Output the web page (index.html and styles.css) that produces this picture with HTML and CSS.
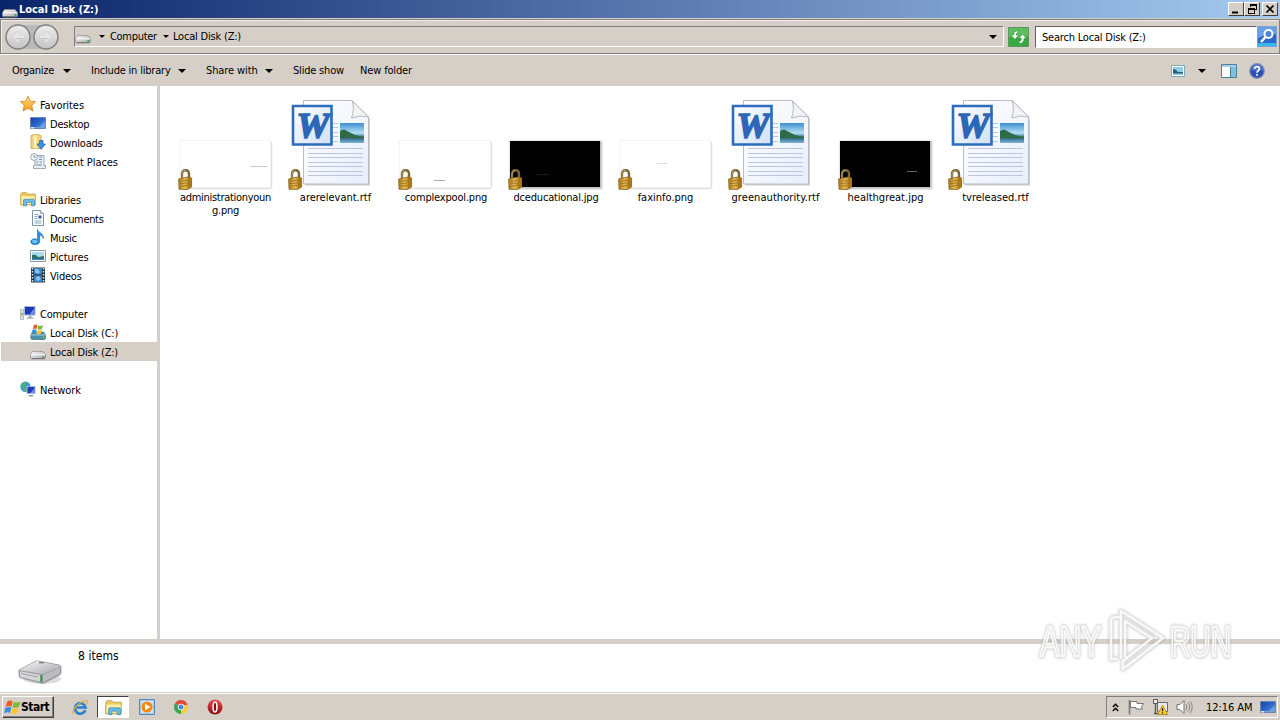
FILE: index.html
```html
<!DOCTYPE html>
<html lang="en">
<head>
<meta charset="utf-8">
<title>Local Disk (Z:)</title>
<link rel="stylesheet" href="styles.css">
</head>
<body>
<svg class="defs" width="0" height="0">
  <defs>
    <linearGradient id="gDrive" x1="0" y1="0" x2="1" y2="1"><stop offset="0" stop-color="#fafafa"/><stop offset="1" stop-color="#a5a5a8"/></linearGradient>
    <linearGradient id="gBlue" x1="0" y1="0" x2="1" y2="1"><stop offset="0" stop-color="#173f9c"/><stop offset=".5" stop-color="#2c66cc"/><stop offset="1" stop-color="#5b9be6"/></linearGradient>
    <linearGradient id="gGold" x1="0" y1="0" x2="1" y2="0"><stop offset="0" stop-color="#a97a1e"/><stop offset=".45" stop-color="#e2b850"/><stop offset="1" stop-color="#a87412"/></linearGradient>
    <linearGradient id="gStar" x1="0" y1="0" x2="0" y2="1"><stop offset="0" stop-color="#ffe27a"/><stop offset="1" stop-color="#f59a1c"/></linearGradient>
    <linearGradient id="gSky" x1="0" y1="0" x2="0" y2="1"><stop offset="0" stop-color="#3c8fd2"/><stop offset=".5" stop-color="#b5e0f3"/><stop offset=".56" stop-color="#8fc3dc"/><stop offset=".72" stop-color="#2a6280"/><stop offset="1" stop-color="#7db4d8"/></linearGradient>
    <linearGradient id="gPage" x1="0" y1="0" x2="1" y2="1"><stop offset="0" stop-color="#ffffff"/><stop offset="1" stop-color="#e8eefb"/></linearGradient>
    <linearGradient id="gWord" x1="0" y1="0" x2="1" y2="1"><stop offset="0" stop-color="#ffffff"/><stop offset="1" stop-color="#cfe0f5"/></linearGradient>
    <linearGradient id="gRed" x1="0" y1="0" x2="0" y2="1"><stop offset="0" stop-color="#f0504c"/><stop offset="1" stop-color="#8e0408"/></linearGradient>
    <linearGradient id="gRound" x1="0" y1="0" x2="0" y2="1"><stop offset="0" stop-color="#efefef"/><stop offset=".5" stop-color="#d8d8d8"/><stop offset="1" stop-color="#c4c4c4"/></linearGradient>
  </defs>
  <symbol id="drive" viewBox="0 0 16 16"><path d="M.5 9.500 2.500 6.500h10.500l2.500 3v3.500l-1 1H1.500l-1-1z" fill="url(#gDrive)" stroke="#8b8b8e" stroke-width=".7"/><path d="M1 9.800h14" stroke="#fff"/><path d="M1.500 13.500h13" stroke="#77777a"/><path d="M12.500 11h1.800v1.700h-1.800z" fill="#3da04a"/></symbol>
  <symbol id="bigdrive" viewBox="0 0 44 26"><ellipse cx="24" cy="20" rx="19" ry="5" fill="#ddd"/><path d="M1 11 17 2.500Q18.500 1.600 20.500 2L41 6Q43 6.800 43 8v5.500Q43 15 41.500 16L27 23.500Q25 24.600 23 24L3 19Q1 18.500 1 16.500z" fill="#a3a4a8" stroke="#85868a" stroke-width=".7"/><path d="M1.500 11 17 2.700Q18.500 1.800 20.500 2.200L41 6.400Q43 7.400 41 8.500L26.500 14.500Q25 15.200 23 14.700z" fill="url(#gDrive)"/><path d="M2 12.300 22 16v6.500L3 18.300Q2 17.800 2 16.500z" fill="#d5d6da"/><path d="M3 14.500 20 18" stroke="#a4a5a9"/><path d="M24 16.500 42 9v5L24.500 23.500z" fill="#bcbdc1"/><path d="M23.500 16v7" stroke="#2f8f45" stroke-width="1.800"/><path d="M21 3.700h5" stroke="#888" stroke-width="1.500"/></symbol>
  <symbol id="star" viewBox="0 0 16 16"><path d="m8 .2 2.300 5 5.400.5-4 3.800 1.300 5.500L8 12.200 3 15l1.300-5.500-4-3.800 5.400-.5z" fill="url(#gStar)" stroke="#d08423" stroke-width=".8"/></symbol>
  <symbol id="desktop" viewBox="0 0 16 16"><path d="M.5 2.500h15v11H.5z" fill="url(#gBlue)" stroke="#6d86b5"/><path d="M8 13 15 6v7z" fill="#79aee8" opacity=".65"/><path d="M1 12.500h14" stroke="#7ba0cc"/><path d="M1 12h3v1.500H1z" fill="#dbe7ef"/></symbol>
  <symbol id="downloads" viewBox="0 0 16 16"><path d="M1 1.500 6 0l5 1.500v13H1z" fill="#f1d783" stroke="#c7a343" stroke-width=".8"/><path d="M4 2 6.500.8V15L4 14z" fill="#fff1b5"/><path d="M9.500 6.500h3.500V10h2.400l-4.200 5.300L7 10h2.500z" fill="#3e91dd" stroke="#1a5da4" stroke-width=".7"/></symbol>
  <symbol id="recent" viewBox="0 0 16 16"><path d="M4.500 2.500H14v10h1.500v3h-12v-3H5z" fill="#e7edf3" stroke="#8b97a3" stroke-width=".8"/><circle cx="4" cy="4" r="3.400" fill="#f5f8fa" stroke="#87919b" stroke-width=".8"/><path d="M4 2v2.200h1.800M9 4h3M9 6.500h3M6 9h2m1.500 0H12M6 12h6" fill="none" stroke="#6f93b0"/></symbol>
  <symbol id="library" viewBox="0 0 16 16"><path d="M.6 3.500 2 1.600h4.500l1 1.400h7.900v11H.6z" fill="#eacb60" stroke="#bd9b39" stroke-width=".7"/><path d="M1.500 5.200h13.200V13H1.500z" fill="#fff0a8"/><path d="M3.500 14.800V9.500q0-1.200 1.200-1.200h8.600q1.200 0 1.200 1.200v5.300h-3v-3.400h-5v3.400z" fill="#6bbbe7" stroke="#3489bc" stroke-width=".7"/></symbol>
  <symbol id="document" viewBox="0 0 16 16"><path d="M2.500.5h8.200L13.500 3.500v12h-11z" fill="#fff" stroke="#7994aa"/><path d="M10.500.5v3h3" fill="#e0e9f0" stroke="#7994aa" stroke-width=".8"/><path d="M4.500 4.500h4M4.500 6.500h3M4.500 8.500h3M4.500 11h7M4.500 13h7" stroke="#8aa6bf"/><path d="M8.500 5.500h3v3h-3z" fill="#315f9b"/></symbol>
  <symbol id="music" viewBox="0 0 16 16"><path d="M7.500.4c.5 3.200 6.500 3.800 5.800 9C12.300 6.800 11 6.200 9.700 6v6.400c0 4.200-8.900 4.300-8.900.6 0-3 4.200-4 6.700-2.500z" fill="#2a8edb" stroke="#1b69af" stroke-width=".6"/><ellipse cx="4.800" cy="12.400" rx="2.600" ry="1.600" fill="#79c5f2"/></symbol>
  <symbol id="picture" viewBox="0 0 16 16"><path d="M.5 2.500h15v11H.5z" fill="#fff" stroke="#7d99aa"/><path d="M2 4h12v8H2z" fill="#a7ddf1"/><path d="M2 7q4-1 6 2l6-1v4H2z" fill="#287068"/><path d="M2 10.500h12V12H2z" fill="#3f86ad"/></symbol>
  <symbol id="video" viewBox="0 0 16 16"><path d="M1 .5h14v15H1z" fill="#253139"/><path d="M4 1h8v6.500H4zM4 8.500h8V15H4z" fill="#3683c7"/><path d="M5 2h3l2 3-2 2-3-2zM6 10l3-1 2 3-3 2-2-1z" fill="#85c2ef"/><path d="M2.500 1v14M13.500 1v14" stroke="#e6edef" stroke-width="1.500" stroke-dasharray="1.500 1.500"/></symbol>
  <symbol id="computer" viewBox="0 0 16 16"><path d="M.5 4.500h3v10h-3z" fill="#d3dbd6" stroke="#98a39e" stroke-width=".6"/><path d="M1.200 8h1.500v2H1.200z" fill="#5fa955"/><path d="M4 1h11.500v9.500H4z" fill="#aebbd5"/><path d="M5 2h9.500v7.500H5z" fill="#1e36b8"/><path d="M9.500 9.500 14.500 3v6.500z" fill="#718ee9"/><path d="M8.500 10.500h3v2h2v1.200H6.500v-1.200h2z" fill="#a5acb8"/></symbol>
  <symbol id="flag" viewBox="0 0 16 16"><path d="M3 2.500Q5 .5 8 2.200L7 7.200Q4 5.700 1.500 7.500z" fill="#ef5a28"/><path d="M9 2.700Q12 4 15.500 2.300L14 7.300Q11 8.900 8 7.700z" fill="#7dbb38"/><path d="M1.200 8.500Q4 6.700 6.800 8.200L5.700 13Q3 11.700 0 13.400z" fill="#3d8ee0"/><path d="M7.800 8.700Q11 9.900 13.800 8.300L12.500 13.400Q9.500 14.900 6.700 13.500z" fill="#fbc72e"/></symbol>
  <symbol id="windrive" viewBox="0 0 16 16"><path d="m.8 11 1.700-3h11l2 3v3.500l-1 1H2l-1.200-1z" fill="#4b91a9" stroke="#47717d" stroke-width=".7"/><path d="M1 11h14.500" stroke="#aed2da"/><path d="M12.500 12.500h2V14h-2z" fill="#65c65a"/><use href="#flag" x="1.500" y="-.5" width="12" height="12"/></symbol>
  <symbol id="network" viewBox="0 0 16 16"><circle cx="5.500" cy="5.700" r="5.200" fill="#3f9ed0"/><path d="M2 2q2-2 4 0l-1 3-3 1zM5 6l4 1-3 4-3-2z" fill="#55b164"/><path d="M6.500 5h9v8h-9z" fill="#a9b9d8"/><path d="M7.500 6h7v6h-7z" fill="#203cba"/><path d="M10.500 12 14.500 7v5z" fill="#708de8"/><path d="M9 14h4v1.500H9z" fill="#8a94a5"/></symbol>
  <symbol id="lock" viewBox="0 0 16 22"><path d="M4 11V6.200q0-4 3.500-4t3.500 4V11" fill="none" stroke="#7a6538" stroke-width="2.400"/><path d="M4 10V6.200q0-3.800 3.500-3.800" fill="none" stroke="#b39d63" stroke-width="1"/><path d="m.6 11 9-2 4 1v9l-4 2.500L1 21.300z" fill="url(#gGold)" stroke="#835912" stroke-width=".7"/><path d="m10 9.300 3.900.8v8.500L10 21.200z" fill="#a87818"/><path d="M2 13.300l8-1M2 15.800l8-1M2 18.300l8-1" stroke="#8d651d" stroke-width=".7"/></symbol>
  <symbol id="word" viewBox="0 0 96 96">
    <path d="M17 9h48l17 17v66.500H17z" fill="#888" opacity=".4"/>
    <path d="M15.500 7.500h48.500L80.500 24v67h-65z" fill="url(#gPage)" stroke="#b8bec8"/>
    <path d="M64 7.500q3 9-.5 17.500 9-3.500 17-1z" fill="#f2f3f5" stroke="#a8a8ac" stroke-width=".8"/>
    <path d="M44 30.500h6M44 34.500h6M44 39.500h6M44 43.500h6M44 48.500h6M20 55.500h55M20 60.500h55M20 64.500h55M20 69.500h55M20 73.500h55M20 78.500h55M20 82.500h55" stroke="#bcc6de"/>
    <path d="M52 30h24v20H52z" fill="url(#gSky)"/><path d="M52 38q4-3 7 0l8 4 9 2v1l-9 .5-15-.5z" fill="#2f6b46"/>
    <path d="M5 13h38.500v38.500H5z" fill="url(#gWord)" stroke="#2e6bbb" stroke-width="2.600"/>
    <text x="25" y="44.500" class="word-w" text-anchor="middle" textLength="33" lengthAdjust="spacingAndGlyphs">W</text>
  </symbol>
</svg>

<div class="desktop">
  <header class="titlebar">
    <svg class="i16 title-ic"><use href="#drive"/></svg>
    <h1>Local Disk (Z:)</h1>
    <div class="winbtns">
      <span class="wb"><svg width="14" height="12"><path d="M3 8.500h6v2H3z"/></svg></span>
      <span class="wb"><svg width="14" height="12"><path d="M5 1h7v6H10V6h1V3H6v1H5zM3 5h7v6H3zM4 7v3h5V7z" fill-rule="evenodd"/></svg></span>
      <span class="wb wb-close"><svg width="14" height="12"><path d="m3.500 2.500 7 7m0-7-7 7" stroke="#000" stroke-width="1.700"/></svg></span>
    </div>
  </header>

  <div class="navbar">
    <svg class="arrows" width="56" height="28" viewBox="0 0 56 28"><path d="M14 2h28q-6 5 0 24H14z" fill="#b9b9b9"/><circle cx="14" cy="14" r="12" fill="url(#gRound)" stroke="#808080" stroke-width="1.500"/><circle cx="42" cy="14" r="12" fill="url(#gRound)" stroke="#808080" stroke-width="1.500"/><path d="M20 14H9m5-5-5 5 5 5M36 14h11m-5-5 5 5-5 5" fill="none" stroke="#e6e6e6" stroke-width="3"/><path d="M20 15.500H11m3-8-6 6.500 6 6.500M36 15.500h9m-3-8 6 6.500-6 6.500" fill="none" stroke="#c2c2c2" stroke-width=".8"/></svg>
    <div class="address">
      <svg class="i16"><use href="#drive"/></svg>
      <i class="tri"></i><span class="crumb">Computer</span>
      <i class="tri tri2"></i><span class="crumb c2">Local Disk (Z:)</span>
      <i class="tri big end"></i>
    </div>
    <svg class="refresh" width="21" height="20" viewBox="0 0 21 20"><path d="M.5.5h20v19H.5z" fill="#38a840" stroke="#5f9465"/><path d="M1 1h19v8q-10 3-19 1z" fill="#6ecb68" opacity=".7"/><path d="M10 4Q6 3.500 5.500 8H3l4 4.500L10.500 8H8Q8 6 10 5.500zM11 16.500q5 0 5-5H18.500L14.500 7 11 11.500h2.500q0 2.500-2.500 3z" fill="#fff" stroke="#1b7c29" stroke-width=".5"/></svg>
    <div class="search">Search Local Disk (Z:)</div>
    <svg class="go" width="20" height="21" viewBox="0 0 20 21"><path d="M.5.500h19v20H.5z" fill="#2a68ce" stroke="#7ba1d9"/><path d="M1 1h18v7Q8 8 1 12z" fill="#6b9fe5"/><path d="M1 17h18v3H1z" fill="#38b8e8"/><circle cx="11.500" cy="8" r="4" fill="#4d83d8" stroke="#fff" stroke-width="2"/><path d="m8.500 11-4.500 5" stroke="#fff" stroke-width="2.600"/></svg>
  </div>

  <div class="toolbar">
    <span class="t1">Organize</span><i class="tri big"></i>
    <span class="t2">Include in library</span><i class="tri big"></i>
    <span class="t3">Share with</span><i class="tri big"></i>
    <span class="t4">Slide show</span>
    <span class="t5">New folder</span>
    <div class="tools">
      <svg width="14" height="12" viewBox="0 0 14 12"><path d="M.5.500h13v11H.5z" fill="#fff" stroke="#81a8bd"/><path d="M2 2h10v8H2z" fill="#8fcdea"/><path d="M2 4q3 0 5 3h5v1.500H2z" fill="#246276"/></svg>
      <i class="tri big"></i>
      <svg class="pane-ic" width="16" height="14" viewBox="0 0 16 14"><path d="M.5.500h15v13H.5z" fill="#fff" stroke="#4a7f9d"/><path d="M1 1h14v2H1z" fill="#a9d0e3"/><path d="M10 3h5v10h-5z" fill="#7ec0dd"/><path d="M9.500 3v10" stroke="#4a7f9d"/></svg>
      <svg width="16" height="16" viewBox="0 0 16 16"><circle cx="8" cy="8" r="7.300" fill="#2a4fb5" stroke="#8192b5" stroke-width="1.300"/><path d="M2 7a6 6 0 0 1 12 0Q8 9 2 7z" fill="#7192dd" opacity=".5"/><path d="M5.600 6Q5.600 3.700 8 3.700T10.400 6C10.400 7.500 8 7.500 8 9.700M8 11v1.800" fill="none" stroke="#fff" stroke-width="1.700"/></svg>
    </div>
  </div>

  <main class="body">
    <nav class="tree">
      <div class="row"><svg class="i16"><use href="#star"/></svg><span class="ls-wide">Favorites</span></div>
      <div class="row sub"><svg class="i16"><use href="#desktop"/></svg><span>Desktop</span></div>
      <div class="row sub"><svg class="i16"><use href="#downloads"/></svg><span>Downloads</span></div>
      <div class="row sub"><svg class="i16"><use href="#recent"/></svg><span class="ls-wide">Recent Places</span></div>
      <div class="row gap"><svg class="i16"><use href="#library"/></svg><span>Libraries</span></div>
      <div class="row sub"><svg class="i16"><use href="#document"/></svg><span class="ls-tight">Documents</span></div>
      <div class="row sub"><svg class="i16"><use href="#music"/></svg><span class="ls-tight">Music</span></div>
      <div class="row sub"><svg class="i16"><use href="#picture"/></svg><span class="ls-wide">Pictures</span></div>
      <div class="row sub"><svg class="i16"><use href="#video"/></svg><span>Videos</span></div>
      <div class="row gap"><svg class="i16"><use href="#computer"/></svg><span>Computer</span></div>
      <div class="row sub"><svg class="i16"><use href="#windrive"/></svg><span>Local Disk (C:)</span></div>
      <div class="row sub selected"><svg class="i16"><use href="#drive"/></svg><span>Local Disk (Z:)</span></div>
      <div class="row gap"><svg class="i16"><use href="#network"/></svg><span class="ls-wide">Network</span></div>
    </nav>
    <section class="files">
      <figure><div class="thumb"><div class="img"><i class="m1"></i></div><svg class="lock"><use href="#lock"/></svg></div><figcaption class="name-long">administrationyoun<br>g.png</figcaption></figure>
      <figure><div class="thumb"><svg class="doc"><use href="#word"/></svg><svg class="lock"><use href="#lock"/></svg></div><figcaption>arerelevant.rtf</figcaption></figure>
      <figure><div class="thumb"><div class="img"><i class="m2"></i></div><svg class="lock"><use href="#lock"/></svg></div><figcaption class="name-mid">complexpool.png</figcaption></figure>
      <figure><div class="thumb"><div class="img black"><i class="m3"></i></div><svg class="lock"><use href="#lock"/></svg></div><figcaption class="name-mid">dceducational.jpg</figcaption></figure>
      <figure><div class="thumb"><div class="img"><i class="m4"></i></div><svg class="lock"><use href="#lock"/></svg></div><figcaption>faxinfo.png</figcaption></figure>
      <figure><div class="thumb"><svg class="doc"><use href="#word"/></svg><svg class="lock"><use href="#lock"/></svg></div><figcaption class="name-open">greenauthority.rtf</figcaption></figure>
      <figure><div class="thumb"><div class="img black"><i class="m5"></i></div><svg class="lock"><use href="#lock"/></svg></div><figcaption>healthgreat.jpg</figcaption></figure>
      <figure><div class="thumb"><svg class="doc"><use href="#word"/></svg><svg class="lock"><use href="#lock"/></svg></div><figcaption>tvreleased.rtf</figcaption></figure>
    </section>
  </main>

  <section class="details"><svg width="44" height="26"><use href="#bigdrive"/></svg><span>8 items</span></section>

  <footer class="taskbar">
    <button class="start"><svg width="17" height="17"><use href="#flag"/></svg>Start</button>
    <div class="quick">
      <svg width="16" height="16" viewBox="0 0 16 16"><path d="M13.300 11.200A5.300 5.300 0 1 1 13.500 8.500H4.500" fill="none" stroke="#2583d3" stroke-width="2.700"/><path d="M2 15Q-1 13 4 7.500T15 1.500Q16.500 3 13.500 6" fill="none" stroke="#e5b42c" stroke-width="1.200"/></svg>
      <span class="active"><svg width="17" height="17"><use href="#library"/></svg></span>
      <svg width="16" height="16" viewBox="0 0 16 16"><path d="M.5.500h15v15H.5z" fill="#a9cbea" stroke="#5288be"/><path d="M2 2h12v12H2z" fill="#cfe3f5"/><circle cx="8" cy="8" r="5.600" fill="#f48a16"/><path d="M6 4.700v6.600L11.500 8z" fill="#fff"/></svg>
      <svg width="14" height="14" viewBox="0 0 14 14"><path d="M7 7 .9 3.500A7 7 0 0 1 13.100 3.500z" fill="#e04a3a"/><path d="M7 7 .9 3.500A7 7 0 0 0 7 14l3-5.300z" fill="#3aa457"/><path d="M7 7 13.100 3.500A7 7 0 0 1 7 14z" fill="#f8cc38"/><path d="M7 3.500h6.100L13.500 5H7z" fill="#e04a3a"/><circle cx="7" cy="7" r="3.200" fill="#fff"/><circle cx="7" cy="7" r="2.500" fill="#4589e8"/></svg>
      <svg width="16" height="16" viewBox="0 0 16 16"><circle cx="8" cy="8" r="7.500" fill="url(#gRed)"/><ellipse cx="8" cy="8" rx="1.900" ry="5" fill="#8c0a0d" stroke="#fff" stroke-width="1.600"/></svg>
    </div>
    <div class="tray">
      <svg class="chev" width="7" height="9" viewBox="0 0 7 9"><path d="M.8 4 3.500 1.300 6.200 4M.8 8 3.500 5.300 6.200 8" fill="none" stroke="#000" stroke-width="1.400"/></svg>
      <svg width="16" height="16" viewBox="0 0 16 16"><path d="M1.500 1v14.500" stroke="#777" stroke-width="1.600"/><path d="M2.500 2.500h6.500v2h6.500l-2 3 1 2.500H8V8.500H2.500z" fill="#fff" stroke="#777"/></svg>
      <svg width="16" height="16" viewBox="0 0 16 16"><path d="M5.500 3.500h10v9h-10z" fill="#e9e9e9" stroke="#686868"/><path d="M1.500.500h4v4h-4z" fill="#eee" stroke="#555"/><path d="M3.500 4.500v10M2 14.500h6" fill="none" stroke="#555" stroke-width="1.300"/><path d="m10.500 6 5 9.500h-10z" fill="#f5d026" stroke="#9d7b08" stroke-width=".7"/><path d="M10.500 9v3.300M10.500 13.300v1.200" stroke="#222" stroke-width="1.300"/></svg>
      <svg width="17" height="16" viewBox="0 0 17 16"><path d="M1 5.500h3L8 1.500v13L4 10.500H1z" fill="#fff" stroke="#777"/><path d="M10 5q2 3 0 6M12 3.500q3.500 4.500 0 9M14 2q4.500 6 0 12" fill="none" stroke="#888"/></svg>
      <time>12:16 AM</time>
      <svg class="i16"><use href="#desktop"/></svg>
    </div>
  </footer>

  <svg class="watermark" width="210" height="76" viewBox="0 0 210 76">
    <g class="halo"><text x="6" y="53" textLength="61" lengthAdjust="spacingAndGlyphs">ANY</text><text x="136" y="53" textLength="61" lengthAdjust="spacingAndGlyphs">RUN</text><path d="M87 56V14h-5q-5 0-5 5v37h7M87 17V8l42 27-40 31v-8l29-23-27-17v36"/></g>
    <g class="core"><text x="6" y="53" textLength="61" lengthAdjust="spacingAndGlyphs">ANY</text><text x="136" y="53" textLength="61" lengthAdjust="spacingAndGlyphs">RUN</text><path d="M87 56V14h-5q-5 0-5 5v37h7M87 17V8l42 27-40 31v-8l29-23-27-17v36"/></g>
  </svg>
</div>
</body>
</html>
```
FILE: styles.css
```css
* { box-sizing: border-box; }
body { margin: 0; font: 11px/13px "DejaVu Sans Condensed", "DejaVu Sans", sans-serif; font-stretch: condensed; letter-spacing: -0.3px; color: #000; background: #d5cfc7; }
svg { display: block; flex: none; }
.defs { position: absolute; overflow: visible; }
.i16 { width: 16px; height: 16px; }
.desktop { position: relative; width: 1280px; height: 720px; overflow: hidden; display: flex; flex-direction: column; white-space: nowrap; }

.titlebar { height: 19px; flex: none; display: flex; align-items: center; padding: 0 2px; background: linear-gradient(90deg, #0a246a, #a6caf0); border-bottom: 1px solid #d5cfc7; }
.title-ic { margin-top: 3px; }
.titlebar h1 { margin: 0 0 0 1px; font-size: 11px; font-weight: bold; color: #fff; letter-spacing: -0.05px; }
.winbtns { margin-left: auto; display: flex; }
.wb { width: 16px; height: 14px; background: #d5cfc7; border: 1px solid; border-color: #fff #404040 #404040 #fff; overflow: hidden; }
.wb-close { margin-left: 2px; }

.navbar { height: 35px; flex: none; display: flex; align-items: center; padding-left: 4px; border: 1px solid #808080; box-shadow: 0 1px #fff, inset 1px 1px #f2efea; background: #d5cfc7; }
.arrows { margin-left: -1px; }
.address { width: 930px; height: 21px; margin-left: 14px; display: flex; align-items: center; border: 1px solid; border-color: #808080 #fff #fff #808080; }
.tri { flex: none; width: 0; height: 0; border: 3px solid transparent; border-top-color: #000; border-bottom: 0; margin-left: 8px; }
.tri.big { border-width: 4px 4px 0; }
.crumb { margin-left: 5px; width: 47px; }
.tri2 { margin-left: 6px; }
.address .c2 { width: 68px; margin-left: 4px; letter-spacing: -0.2px; }
.tri.end { margin-left: auto; margin-right: 6px; }
.refresh { margin-left: 4px; }
.search { width: 222px; height: 22px; margin-left: 6px; padding: 4px 6px; background: #fff; border: 1px solid; border-color: #606060 #fff #fff #606060; letter-spacing: -0.2px; }

.toolbar { height: 32px; flex: none; display: flex; align-items: center; padding-left: 12px; border-top: 1px solid #fff; }
.toolbar span { flex: none; }
.t1 { width: 43px; }
.t2 { width: 79px; margin-left: 20px; letter-spacing: -0.2px; }
.t3 { width: 51px; margin-left: 20px; letter-spacing: -0.1px; }
.t4 { width: 50px; margin-left: 20px; letter-spacing: -0.2px; }
.t5 { margin-left: 17px; letter-spacing: -0.15px; }
.tools { margin-left: auto; padding-right: 15px; display: flex; align-items: center; }
.tools .tri { margin-left: 13px; }
.pane-ic { margin: 0 12px 0 15px; }

.body { height: 553px; flex: none; display: flex; background: #fff; }
.tree { width: 160px; padding-top: 9px; border-right: 3px solid #d5cfc7; }
.row { height: 19px; padding-left: 20px; display: flex; align-items: center; gap: 4px; letter-spacing: -0.2px; }
.row span { padding-top: 2px; }
.row svg { margin-top: -1px; }
.ls-wide { letter-spacing: -0.07px; }
.ls-tight { letter-spacing: -0.33px; }
.sub { padding-left: 30px; }
.gap { margin-top: 19px; }
.selected { background: #d5cfc7; margin-left: 1px; padding-left: 29px; }
.row.selected svg { margin-top: 3px; }

.files { flex: 1; display: flex; align-items: flex-start; padding: 6px 0 0 11px; }
figure { width: 110px; margin: 0; display: flex; flex-direction: column; align-items: center; }
.thumb { position: relative; width: 96px; height: 99px; padding-top: 49px; display: flex; justify-content: center; align-items: flex-start; }
.img { position: relative; width: 90px; height: 46px; background: #fff; margin-left: -2px; box-shadow: 0 0 0 1px #f4f4f4, 1px 1px 2px 0 #999; }
.img.black { background: #000; box-shadow: 1px 1px 2px 1px #bbb; }
.img i { position: absolute; height: 1px; }
.m1 { width: 17px; left: 70px; top: 25px; background: #c8c8c8; }
.m2 { width: 11px; left: 34px; top: 39px; background: #aaa; }
.m3 { width: 12px; left: 27px; top: 33px; background: #0d241a; }
.m4 { width: 10px; left: 37px; top: 22px; background: #ddd; }
.m5 { width: 10px; left: 67px; top: 30px; background: #666; }
.doc { width: 96px; height: 96px; margin-top: -48px; }
.lock { position: absolute; left: 0; top: 76px; width: 16px; height: 22px; }
.word-w { font: italic bold 36px "Liberation Serif", serif; letter-spacing: 0; fill: #2e66b8; stroke: #2e66b8; stroke-width: 1.6px; }
figcaption { text-align: center; margin-left: -1px; letter-spacing: 0; }
.name-long { letter-spacing: -0.3px; }
.name-mid { letter-spacing: -0.18px; margin-left: 0; }
.name-open { letter-spacing: 0.08px; }

.details { height: 53px; flex: none; border-top: 5px solid #d5cfc7; background: #fff; display: flex; padding: 6px 0 0 18px; }
.details svg { margin-top: 9px; }
.details span { margin-left: 16px; font-size: 12px; letter-spacing: 0.05px; }

.taskbar { height: 28px; flex: none; display: flex; align-items: center; padding: 1px 2px 0 2px; border-top: 1px solid #d5cfc7; box-shadow: inset 0 1px #fff; background: #d5cfc7; }
.start { width: 52px; height: 22px; padding: 0 0 0 1px; display: flex; align-items: center; background: #d5cfc7; border: 1px solid; border-color: #fff #404040 #404040 #fff; box-shadow: inset -1px -1px #808080; font: bold 12px "DejaVu Sans Condensed", sans-serif; letter-spacing: -0.5px; color: #000; }
.quick { margin-left: 18px; display: flex; align-items: center; }
.active { width: 32px; height: 22px; margin: 0 10px 0 9px; padding: 2px 7px; background: #fff; border: 1px solid; border-color: #404040 #fff #fff #404040; }
.quick > svg + svg { margin-left: 19px; }
.tray { margin-left: auto; width: 172px; height: 22px; display: flex; align-items: center; border: 1px solid; border-color: #808080 #fff #fff #808080; padding-left: 5px; }
.chev { margin-right: 9px; }
.tray svg + svg { margin-right: 8px; }
.tray time { width: 48px; margin-left: 5px; letter-spacing: -0.05px; }
.tray time + svg { margin-left: 6px; }

.watermark { position: absolute; left: 1034px; top: 603px; overflow: visible; }
.watermark text { font: 43px "Liberation Sans", sans-serif; letter-spacing: 0; }
.halo, .core { fill: none; stroke-linejoin: round; }
.halo { stroke: #a8a8a8; stroke-width: 5.5px; opacity: .45; filter: blur(1.3px); }
.core { stroke: #fff; stroke-width: 2.6px; opacity: .85; }
```
